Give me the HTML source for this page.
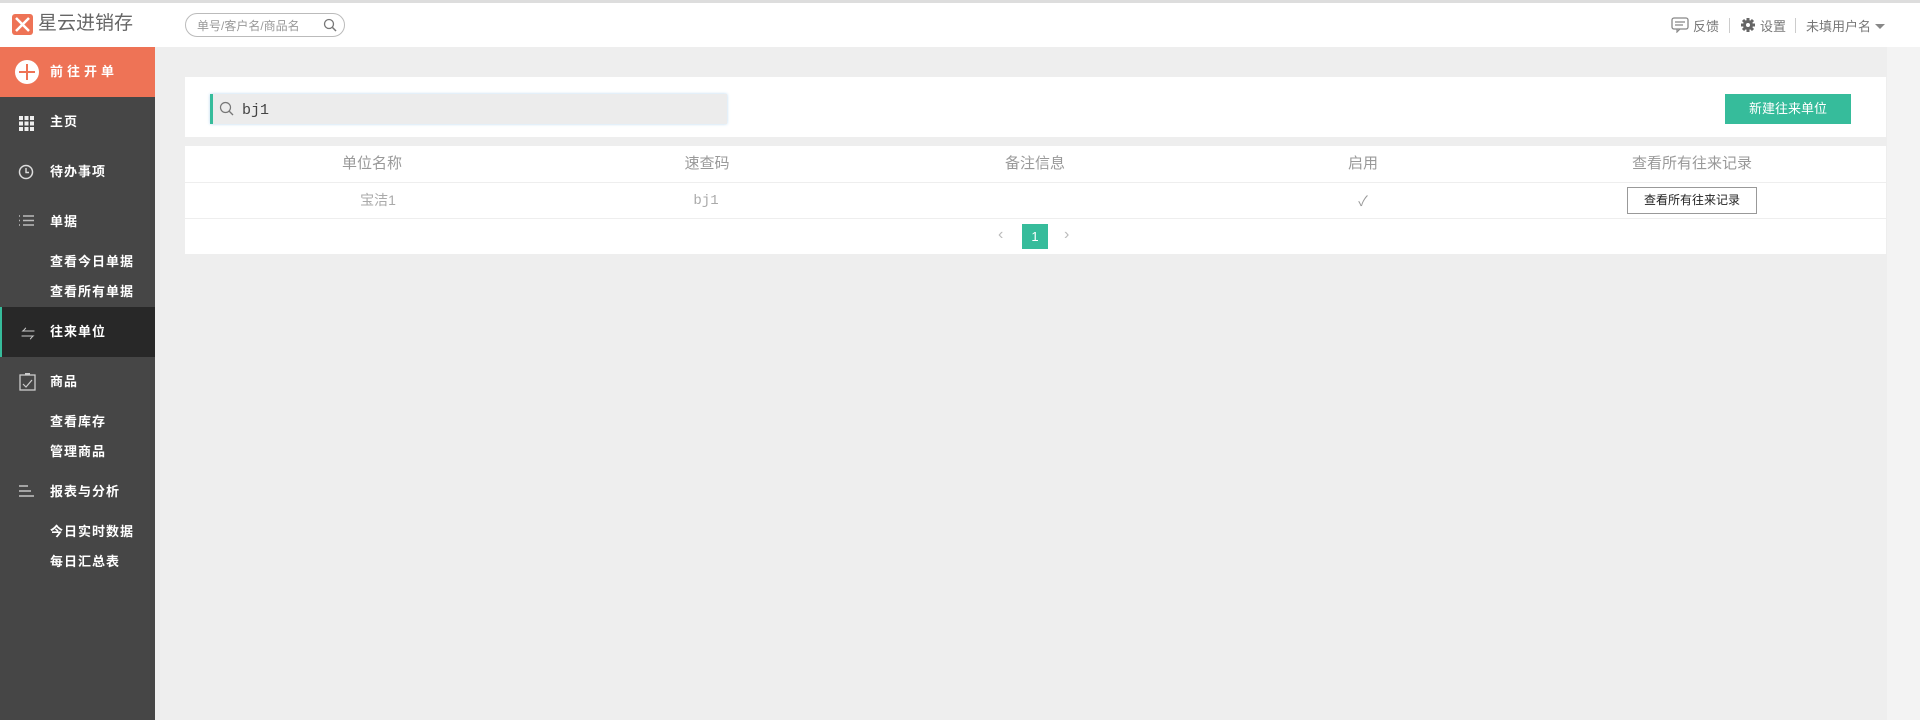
<!DOCTYPE html>
<html><head><meta charset="utf-8"><style>
*{margin:0;padding:0;box-sizing:border-box}
body{width:1920px;height:720px;overflow:hidden;background:#eee;font-family:"Liberation Sans","Noto Sans CJK SC",sans-serif;position:relative}
.abs{position:absolute}
#top{left:0;top:0;width:1920px;height:47px;background:#fff;border-top:3px solid #ddd}
#side{left:0;top:47px;width:155px;height:673px;background:#464646}
.si{position:absolute;left:50px;color:#fff;font-size:13px;font-weight:bold;letter-spacing:1px;line-height:20px}
.hd{position:absolute;color:#999;font-size:15px;line-height:20px;transform:translateX(-50%)}
.cd{position:absolute;color:#aaa;font-size:14px;line-height:20px;transform:translateX(-50%)}
</style></head><body>
<div id="top" class="abs">
 <div class="abs" style="left:12px;top:11px;width:21px;height:21px;background:#ee7356;border-radius:3px">
  <svg width="21" height="21"><path d="M4 4L17 17M17 4L4 17" stroke="#fff" stroke-width="2.5" fill="none"/></svg></div>
 <div class="abs" style="left:38px;top:9px;font-size:19px;color:#666;line-height:24px">星云进销存</div>
 <div class="abs" style="left:185px;top:10px;width:160px;height:24px;border:1px solid #bbb;border-radius:12px">
  <span style="position:absolute;left:11px;top:3px;font-size:12px;color:#999">单号/客户名/商品名</span>
  <svg class="abs" style="left:137px;top:4px" width="15" height="15"><circle cx="6" cy="6" r="4.5" stroke="#777" stroke-width="1.3" fill="none"/><path d="M9.5 9.5L13 13" stroke="#777" stroke-width="1.5"/></svg></div>
 <svg class="abs" style="left:1671px;top:14px" width="18" height="16"><rect x="1" y="1" width="16" height="11" rx="2" stroke="#888" stroke-width="1.3" fill="none"/><path d="M4 5h10M4 8h8M6 12l0 3 3-3" stroke="#888" stroke-width="1.2" fill="none"/></svg>
 <div class="abs" style="left:1693px;top:13px;font-size:13px;color:#777">反馈</div>
 <div class="abs" style="left:1729px;top:15px;width:1px;height:15px;background:#ccc"></div>
 <svg class="abs" style="left:1740px;top:14px" width="16" height="16"><circle cx="8" cy="8" r="5" fill="#666"/><path d="M8 1v14M1 8h14M3 3l10 10M13 3L3 13" stroke="#666" stroke-width="3"/><circle cx="8" cy="8" r="2" fill="#fff"/></svg>
 <div class="abs" style="left:1760px;top:13px;font-size:13px;color:#777">设置</div>
 <div class="abs" style="left:1795px;top:15px;width:1px;height:15px;background:#ccc"></div>
 <div class="abs" style="left:1806px;top:13px;font-size:13px;color:#777">未填用户名</div>
 <div class="abs" style="left:1875px;top:21px;border:5px solid transparent;border-top:5px solid #888"></div>
</div>
<div class="abs" style="left:1887px;top:47px;width:33px;height:673px;background:#f3f3f3"></div>
<div id="side" class="abs">
 <div class="abs" style="left:0;top:0;width:155px;height:50px;background:#ee7356"></div>
 <div class="abs" style="left:15px;top:13px;width:24px;height:24px;border-radius:50%;background:#fff"></div>
 <div class="abs" style="left:19px;top:24px;width:16px;height:2px;background:#ee7356"></div>
 <div class="abs" style="left:26px;top:17px;width:2px;height:16px;background:#ee7356"></div>
 <div class="si" style="top:15px;letter-spacing:4px">前往开单</div>
 <svg class="abs" style="left:19px;top:69px" width="15" height="15" fill="#eee"><rect x="0" y="0" width="4" height="4"/><rect x="5.5" y="0" width="4" height="4"/><rect x="11" y="0" width="4" height="4"/><rect x="0" y="5.5" width="4" height="4"/><rect x="5.5" y="5.5" width="4" height="4"/><rect x="11" y="5.5" width="4" height="4"/><rect x="0" y="11" width="4" height="4"/><rect x="5.5" y="11" width="4" height="4"/><rect x="11" y="11" width="4" height="4"/></svg>
 <div class="si" style="top:65px">主页</div>
 <svg class="abs" style="left:18px;top:117px" width="16" height="16"><circle cx="8" cy="8" r="6.5" stroke="#ddd" stroke-width="1.5" fill="none"/><path d="M8 4v4.5h3" stroke="#ddd" stroke-width="1.4" fill="none"/></svg>
 <div class="si" style="top:115px">待办事项</div>
 <svg class="abs" style="left:19px;top:168px" width="15" height="12"><path d="M0 1h1M0 5.5h1M0 10h1M4 1h11M4 5.5h11M4 10h11" stroke="#bbb" stroke-width="1.5"/></svg>
 <div class="si" style="top:165px">单据</div>
 <div class="si" style="top:205px">查看今日单据</div>
 <div class="si" style="top:235px">查看所有单据</div>
 <div class="abs" style="left:0;top:260px;width:155px;height:50px;background:#282828;border-left:2px solid #36bc9b"></div>
 <div class="abs" style="left:21px;top:277px;color:#ccc;font-size:14px">⇋</div>
 <div class="si" style="top:275px">往来单位</div>
 <svg class="abs" style="left:19px;top:326px" width="17" height="18"><rect x="1" y="2" width="15" height="15" stroke="#ccc" stroke-width="1.3" fill="none"/><path d="M6 1h5" stroke="#ccc" stroke-width="2"/><path d="M4 11l3 3 6-7" stroke="#ccc" stroke-width="1.2" fill="none"/></svg>
 <div class="si" style="top:325px">商品</div>
 <div class="si" style="top:365px">查看库存</div>
 <div class="si" style="top:395px">管理商品</div>
 <svg class="abs" style="left:19px;top:438px" width="16" height="13"><path d="M0 1h9M0 6h12M0 11h15" stroke="#ddd" stroke-width="1.3"/></svg>
 <div class="si" style="top:435px">报表与分析</div>
 <div class="si" style="top:475px">今日实时数据</div>
 <div class="si" style="top:505px">每日汇总表</div>
</div>
<div class="abs" style="left:185px;top:77px;width:1701px;height:60px;background:#fff"></div>
<div class="abs" style="left:210px;top:94px;width:517px;height:30px;background:#ececec;border-left:3px solid #36bc9b;box-shadow:0 0 3px #b8d8f0"></div>
<svg class="abs" style="left:219px;top:101px" width="16" height="16"><circle cx="6.5" cy="6.5" r="5" stroke="#777" stroke-width="1.2" fill="none"/><path d="M10 10l4 4" stroke="#777" stroke-width="1.3"/></svg>
<div class="abs" style="left:242px;top:102px;font-family:'Liberation Mono',monospace;font-size:15px;color:#444">bj1</div>
<div class="abs" style="left:1725px;top:94px;width:126px;height:30px;background:#36bc9b;color:#fff;font-size:13px;line-height:30px;text-align:center">新建往来单位</div>
<div class="abs" style="left:185px;top:146px;width:1701px;height:108px;background:#fff"></div>
<div class="abs" style="left:185px;top:182px;width:1701px;height:1px;background:#eee"></div>
<div class="abs" style="left:185px;top:218px;width:1701px;height:1px;background:#eee"></div>
<div class="hd" style="left:372px;top:154px">单位名称</div>
<div class="hd" style="left:707px;top:154px">速查码</div>
<div class="hd" style="left:1035px;top:154px">备注信息</div>
<div class="hd" style="left:1363px;top:154px">启用</div>
<div class="hd" style="left:1692px;top:154px">查看所有往来记录</div>
<div class="cd" style="left:378px;top:190px">宝洁1</div>
<div class="cd" style="left:706px;top:191px;font-family:'Liberation Mono',monospace">bj1</div>
<div class="cd" style="left:1363px;top:191px;color:#999">✓</div>
<div class="abs" style="left:1627px;top:187px;width:130px;height:27px;border:1px solid #999;font-size:12px;line-height:25px;text-align:center;color:#222">查看所有往来记录</div>
<div class="abs" style="left:998px;top:226px;color:#bbb;font-size:16px">‹</div>
<div class="abs" style="left:1022px;top:224px;width:26px;height:25px;background:#36bc9b;color:#fff;font-size:13px;line-height:25px;text-align:center">1</div>
<div class="abs" style="left:1064px;top:226px;color:#bbb;font-size:16px">›</div>
</body></html>
